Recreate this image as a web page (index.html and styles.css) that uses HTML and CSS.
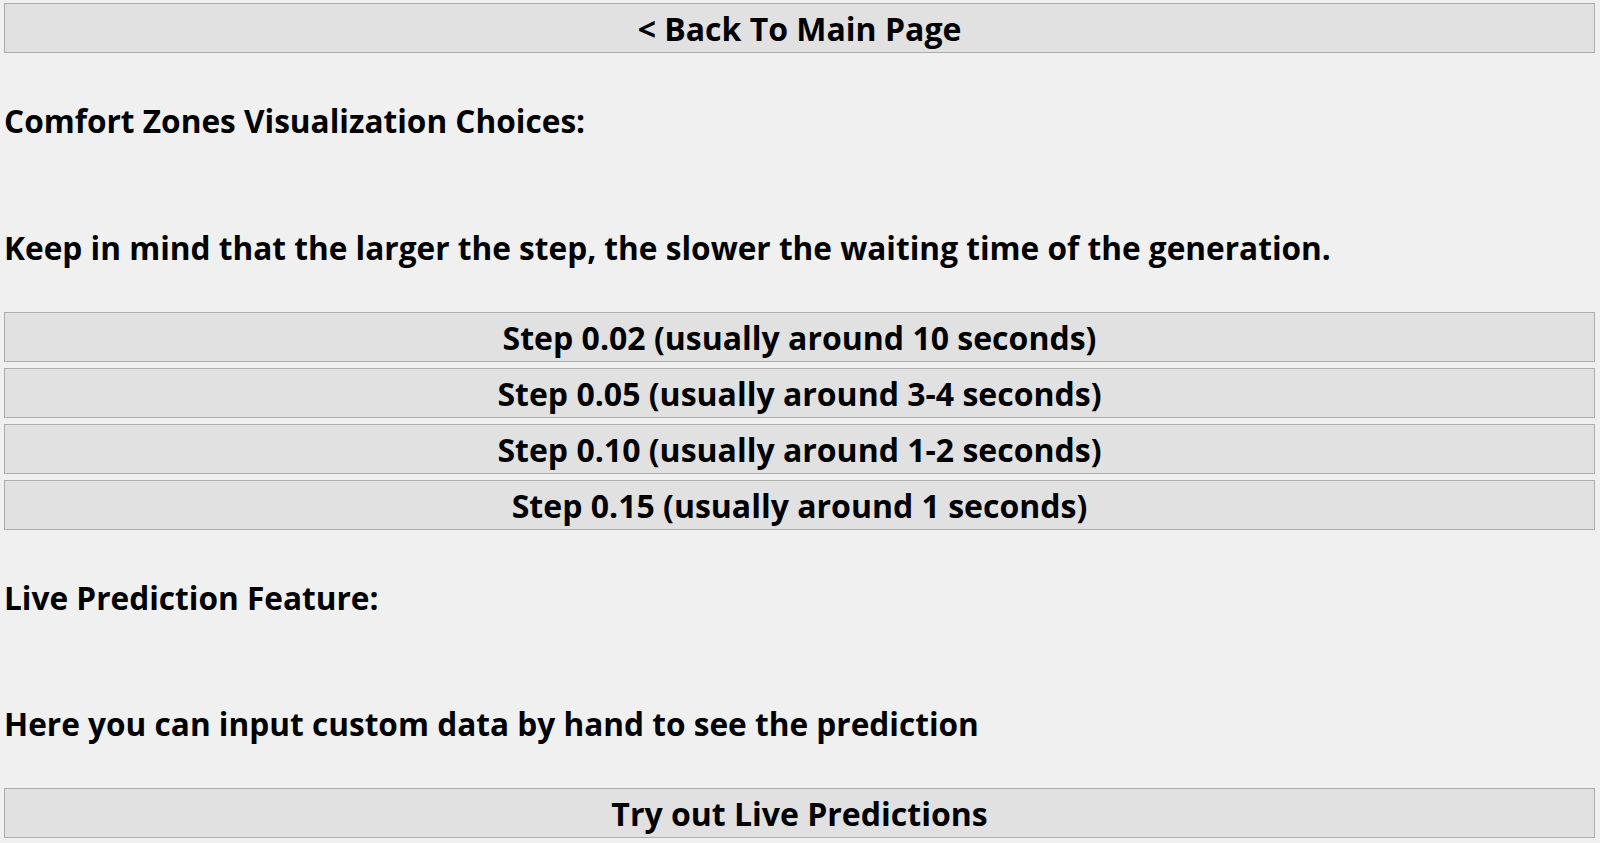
FILE: index.html
```html
<!DOCTYPE html>
<html>
<head>
<meta charset="utf-8">
<link rel="stylesheet" href="styles.css">
</head>
<body>
<div class="page">
  <button class="btn">&lt; Back To Main Page</button>
  <div class="label label-first">Comfort Zones Visualization Choices:</div>
  <div class="label label-note">Keep in mind that the larger the step, the slower the waiting time of the generation.</div>
  <div class="steps">
    <button class="btn">Step 0.02 (usually around 10 seconds)</button>
    <button class="btn">Step 0.05 (usually around 3-4 seconds)</button>
    <button class="btn">Step 0.10 (usually around 1-2 seconds)</button>
    <button class="btn">Step 0.15 (usually around 1 seconds)</button>
  </div>
  <div class="label label-section">Live Prediction Feature:</div>
  <div class="label label-note label-here">Here you can input custom data by hand to see the prediction</div>
  <button class="btn btn-last">Try out Live Predictions</button>
</div>
</body>
</html>
```

FILE: styles.css
```css
html, body {
  margin: 0;
  padding: 0;
  background: #f0f0f0;
}

.page {
  display: flex;
  flex-direction: column;
  padding: 3px 5px 0 4px;
  font-family: "Open Sans", "Noto Sans", sans-serif;
  font-weight: 700;
  color: #000;
}

.btn {
  display: block;
  width: 100%;
  height: 50px;
  margin: 0;
  padding: 2px 0 0;
  border: 1px solid #adadad;
  background: #e1e1e1;
  font-family: inherit;
  font-weight: 700;
  font-size: 32px;
  color: #000;
  text-align: center;
  line-height: 44px;
}

.label {
  height: 44px;
  line-height: 44px;
  font-size: 31.6px;
  white-space: nowrap;
}

.label-first { margin-top: 46px; }
.label-note { margin-top: 83px; }
.label-section { margin-top: 46px; }
.label-here { margin-top: 82px; }

.steps {
  display: flex;
  flex-direction: column;
  gap: 6px;
  margin-top: 42px;
}

.btn-last { margin-top: 42px; }
```
